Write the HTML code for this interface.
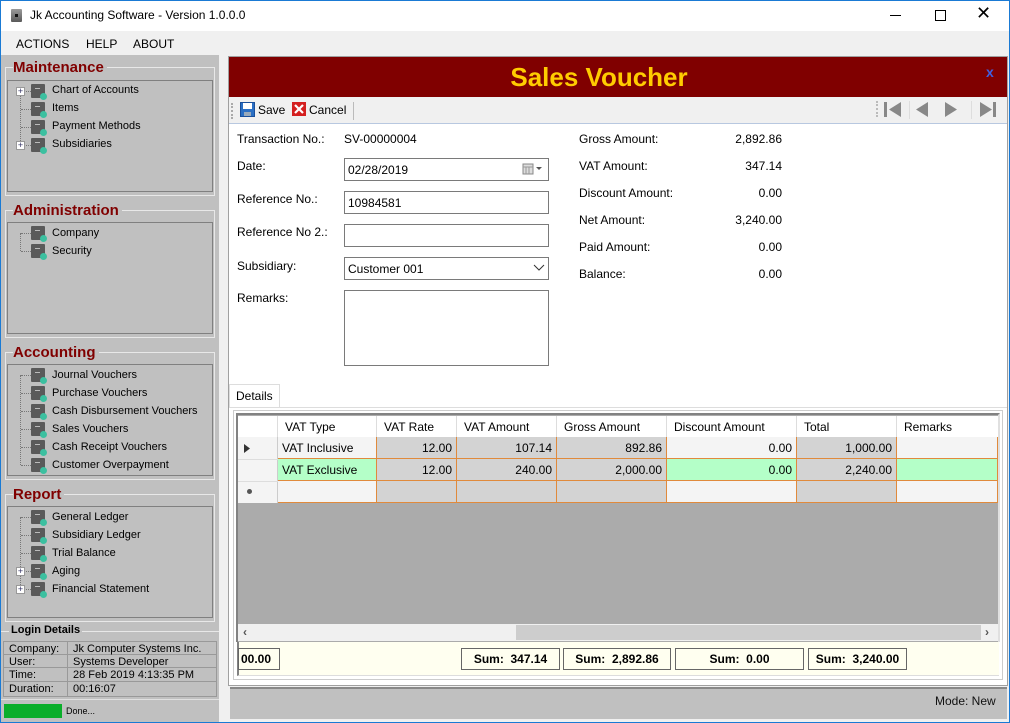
<!DOCTYPE html>
<html><head><meta charset="utf-8"><style>
*{box-sizing:border-box;margin:0;padding:0}
body{width:1010px;height:723px;position:relative;overflow:hidden;font-family:"Liberation Sans",sans-serif;font-size:12px;color:#000;background:#f0f0f0}
.a{position:absolute}
.gt{position:absolute;left:13px;font-weight:bold;font-size:15px;color:#800000;background:#c0c0c0;padding-right:3px}
.gb{position:absolute;left:5px;width:210px;border:1px solid #e8e8e8}
.box{position:absolute;left:7px;width:206px;border:1px solid #808080;border-right-color:#808080}
.ti{position:absolute;left:52px;font-size:11px;white-space:nowrap;margin-top:1px}
.ic{position:absolute;left:31px;width:14px;height:14px;background:#5a5a5a;border-radius:1px;margin-top:1px}
.ic::before{content:"";position:absolute;left:4px;top:4px;width:5px;height:1px;background:#bbb}
.ic::after{content:"";position:absolute;right:-2px;bottom:-2px;width:7px;height:7px;border-radius:50%;background:#3cc0a0}
.pl{position:absolute;left:16px;width:9px;height:9px;border:1px solid #999;background:#fff;font-size:9px;line-height:7px;text-align:center;color:#336;margin-top:1px}
.dl{position:absolute;left:20px;border-left:1px dotted #777;margin-top:1px}
.dh{position:absolute;left:21px;width:10px;border-top:1px dotted #777;margin-top:1px}
.lbl{position:absolute;left:237px}
.inp{position:absolute;left:344px;width:205px;height:23px;border:1px solid #7a7a7a;background:#fff;padding:4px 3px}
.rl{position:absolute;left:579px}
.rv{position:absolute;left:680px;width:102px;text-align:right}
.c{position:absolute;height:22px;border-right:1px solid #e08a3c;border-bottom:1px solid #e08a3c;padding:4px 4px;white-space:nowrap}
.h{position:absolute;top:416px;height:21px;background:#fff;border-right:1px solid #ddd;padding:4px 7px}
.sum{position:absolute;top:648px;height:22px;border:1px solid #666;background:#fffff0;font-weight:bold;font-size:12px;text-align:center;padding-top:3px}
</style></head><body>
<div class="a" style="left:0;top:0;width:1010px;height:723px;border:1px solid #1a7ad4;z-index:50;pointer-events:none"></div>
<div class="a" style="left:0;top:0;width:1010px;height:31px;background:#fff"></div>
<div class="a" style="left:11px;top:9px;width:11px;height:13px;background:linear-gradient(#9a9a9a,#5a5a5a);border-radius:1px"></div>
<div class="a" style="left:15px;top:14px;width:3px;height:3px;background:#111"></div>
<div class="a" style="left:30px;top:8px;font-size:12px">Jk Accounting Software - Version 1.0.0.0</div>
<div class="a" style="left:890px;top:15px;width:11px;height:1px;background:#000"></div>
<div class="a" style="left:935px;top:10px;width:11px;height:11px;border:1px solid #000"></div>
<div class="a" style="left:976px;top:3px;font-size:18px;font-weight:normal">✕</div>
<div class="a" style="left:16px;top:37px">ACTIONS</div>
<div class="a" style="left:86px;top:37px">HELP</div>
<div class="a" style="left:133px;top:37px">ABOUT</div>
<div class="a" style="left:1px;top:55px;width:218px;height:667px;background:#c0c0c0"></div>
<div class="a" style="left:219px;top:55px;width:9px;height:667px;background:#f0f0f0"></div>

<div class="gb" style="top:67px;height:129px"></div><div class="gt" style="top:59px">Maintenance</div>
<div class="box" style="top:80px;height:112px"></div>
<div class="dl" style="top:90px;height:54px"></div>
<div class="dh" style="top:90px"></div><div class="dh" style="top:108px"></div><div class="dh" style="top:126px"></div><div class="dh" style="top:144px"></div>
<div class="pl" style="top:86px">+</div><div class="pl" style="top:140px">+</div>
<div class="ic" style="top:83px"></div><div class="ti" style="top:83px">Chart of Accounts</div>
<div class="ic" style="top:101px"></div><div class="ti" style="top:101px">Items</div>
<div class="ic" style="top:119px"></div><div class="ti" style="top:119px">Payment Methods</div>
<div class="ic" style="top:137px"></div><div class="ti" style="top:137px">Subsidiaries</div>

<div class="gb" style="top:210px;height:128px"></div><div class="gt" style="top:202px">Administration</div>
<div class="box" style="top:222px;height:112px"></div>
<div class="dl" style="top:232px;height:18px"></div>
<div class="dh" style="top:232px"></div><div class="dh" style="top:250px"></div>
<div class="ic" style="top:225px"></div><div class="ti" style="top:226px">Company</div>
<div class="ic" style="top:243px"></div><div class="ti" style="top:244px">Security</div>

<div class="gb" style="top:352px;height:128px"></div><div class="gt" style="top:344px">Accounting</div>
<div class="box" style="top:364px;height:112px"></div>
<div class="dl" style="top:374px;height:90px"></div>
<div class="dh" style="top:374px"></div><div class="dh" style="top:392px"></div><div class="dh" style="top:410px"></div><div class="dh" style="top:428px"></div><div class="dh" style="top:446px"></div><div class="dh" style="top:464px"></div>
<div class="ic" style="top:367px"></div><div class="ti" style="top:368px">Journal Vouchers</div>
<div class="ic" style="top:385px"></div><div class="ti" style="top:386px">Purchase Vouchers</div>
<div class="ic" style="top:403px"></div><div class="ti" style="top:404px">Cash Disbursement Vouchers</div>
<div class="ic" style="top:421px"></div><div class="ti" style="top:422px">Sales Vouchers</div>
<div class="ic" style="top:439px"></div><div class="ti" style="top:440px">Cash Receipt Vouchers</div>
<div class="ic" style="top:457px"></div><div class="ti" style="top:458px">Customer Overpayment</div>

<div class="gb" style="top:494px;height:128px"></div><div class="gt" style="top:486px">Report</div>
<div class="box" style="top:506px;height:112px"></div>
<div class="dl" style="top:516px;height:72px"></div>
<div class="dh" style="top:516px"></div><div class="dh" style="top:534px"></div><div class="dh" style="top:552px"></div><div class="dh" style="top:570px"></div><div class="dh" style="top:588px"></div>
<div class="pl" style="top:566px">+</div><div class="pl" style="top:584px">+</div>
<div class="ic" style="top:509px"></div><div class="ti" style="top:510px">General Ledger</div>
<div class="ic" style="top:527px"></div><div class="ti" style="top:528px">Subsidiary Ledger</div>
<div class="ic" style="top:545px"></div><div class="ti" style="top:546px">Trial Balance</div>
<div class="ic" style="top:563px"></div><div class="ti" style="top:564px">Aging</div>
<div class="ic" style="top:581px"></div><div class="ti" style="top:582px">Financial Statement</div>

<div class="a" style="left:1px;top:631px;width:218px;border-top:1px solid #e8e8e8"></div>
<div class="a" style="left:9px;top:624px;font-weight:bold;font-size:11px;background:#c0c0c0;padding:0 2px">Login Details</div>
<div class="a" style="left:3px;top:641px;width:214px;height:56px;border:1px solid #999;font-size:11px">
<div class="a" style="left:0;top:12px;width:212px;border-top:1px solid #999"></div>
<div class="a" style="left:0;top:25px;width:212px;border-top:1px solid #999"></div>
<div class="a" style="left:0;top:39px;width:212px;border-top:1px solid #999"></div>
<div class="a" style="left:63px;top:0;height:54px;border-left:1px solid #999"></div>
<div class="a" style="left:5px;top:1px">Company:</div><div class="a" style="left:69px;top:1px">Jk Computer Systems Inc.</div>
<div class="a" style="left:5px;top:14px">User:</div><div class="a" style="left:69px;top:14px">Systems Developer</div>
<div class="a" style="left:5px;top:27px">Time:</div><div class="a" style="left:69px;top:27px">28 Feb 2019 4:13:35 PM</div>
<div class="a" style="left:5px;top:41px">Duration:</div><div class="a" style="left:69px;top:41px">00:16:07</div>
</div>
<div class="a" style="left:1px;top:699px;width:218px;border-top:1px solid #e0e0e0"></div>
<div class="a" style="left:4px;top:704px;width:58px;height:14px;background:#0aae2a"></div>
<div class="a" style="left:66px;top:706px;font-size:9px">Done...</div>

<div class="a" style="left:228px;top:56px;width:780px;height:630px;background:#fff;border:1px solid #a0a0a0"></div>
<div class="a" style="left:229px;top:57px;width:778px;height:40px;background:#800000"></div>
<div class="a" style="left:229px;top:62px;width:740px;text-align:center;font-size:26px;font-weight:bold;color:#ffcc00">Sales Voucher</div>
<div class="a" style="left:986px;top:64px;color:#4060e0;font-weight:bold;font-size:14px">x</div>
<div class="a" style="left:229px;top:97px;width:778px;height:27px;background:#f0f0f0;border-bottom:1px solid #b8c8e0"></div>
<div class="a" style="left:231px;top:103px;height:16px;border-left:2px dotted #aaa"></div>
<svg class="a" style="left:240px;top:102px" width="15" height="15"><rect x="0.5" y="0.5" width="14" height="14" fill="#2a6fc4" stroke="#1a4f9a"/><rect x="3" y="1" width="9" height="6" fill="#fff"/><rect x="4" y="10" width="7" height="4" fill="#9ab"/></svg>
<div class="a" style="left:258px;top:103px">Save</div>
<svg class="a" style="left:292px;top:102px" width="14" height="14"><rect width="14" height="14" fill="#d42020"/><path d="M3 3L11 11M11 3L3 11" stroke="#fff" stroke-width="2.2"/></svg>
<div class="a" style="left:309px;top:103px">Cancel</div>
<div class="a" style="left:353px;top:102px;height:18px;border-left:1px solid #bbb"></div>
<div class="a" style="left:876px;top:101px;height:16px;border-left:2px dotted #bbb"></div>
<svg class="a" style="left:882px;top:100px" width="120" height="20" fill="#888"><rect x="2" y="2" width="3" height="15"/><path d="M19 2L7 9.5L19 17Z"/><path d="M46 2L34 9.5L46 17Z"/><path d="M63 2L75 9.5L63 17Z"/><path d="M98 2L110 9.5L98 17Z"/><rect x="111" y="2" width="3" height="15"/><rect x="27" y="1" width="1" height="18" fill="#ddd"/><rect x="89" y="1" width="1" height="18" fill="#ddd"/></svg>

<div class="lbl" style="top:132px">Transaction No.:</div><div class="a" style="left:344px;top:132px">SV-00000004</div>
<div class="lbl" style="top:159px">Date:</div>
<div class="inp" style="top:158px">02/28/2019</div>
<svg class="a" style="left:522px;top:163px" width="22" height="12"><rect x="1" y="1" width="10" height="10" fill="#ddd" stroke="#888"/><path d="M1 4H11M4 4V11M7 4V11" stroke="#999"/><path d="M14 4H20L17 7Z" fill="#555"/></svg>
<div class="lbl" style="top:192px">Reference No.:</div>
<div class="inp" style="top:191px">10984581</div>
<div class="lbl" style="top:225px">Reference No 2.:</div>
<div class="inp" style="top:224px"></div>
<div class="lbl" style="top:259px">Subsidiary:</div>
<div class="inp" style="top:257px;padding-left:3px">Customer 001</div>
<svg class="a" style="left:533px;top:264px" width="12" height="8"><path d="M1 1L6 6L11 1" stroke="#333" fill="none"/></svg>
<div class="lbl" style="top:291px">Remarks:</div>
<div class="inp" style="top:290px;height:76px"></div>

<div class="rl" style="top:132px">Gross Amount:</div><div class="rv" style="top:132px">2,892.86</div>
<div class="rl" style="top:159px">VAT Amount:</div><div class="rv" style="top:159px">347.14</div>
<div class="rl" style="top:186px">Discount Amount:</div><div class="rv" style="top:186px">0.00</div>
<div class="rl" style="top:213px">Net Amount:</div><div class="rv" style="top:213px">3,240.00</div>
<div class="rl" style="top:240px">Paid Amount:</div><div class="rv" style="top:240px">0.00</div>
<div class="rl" style="top:267px">Balance:</div><div class="rv" style="top:267px">0.00</div>

<div class="a" style="left:229px;top:384px;width:51px;height:24px;border:1px solid #ddd;border-bottom:none;background:#fff;padding:4px 6px">Details</div>
<div class="a" style="left:229px;top:407px;width:778px;border-top:1px solid #ddd"></div>
<div class="a" style="left:233px;top:410px;width:770px;height:270px;border:1px solid #ccc"></div>
<div class="a" style="left:236px;top:413px;width:764px;height:229px;background:#ababab;border:2px solid #828282;border-right-color:#e0e0e0;border-bottom:none"></div>
<div class="h" style="left:238px;width:40px"></div>
<div class="h" style="left:278px;width:99px">VAT Type</div>
<div class="h" style="left:377px;width:80px">VAT Rate</div>
<div class="h" style="left:457px;width:100px">VAT Amount</div>
<div class="h" style="left:557px;width:110px">Gross Amount</div>
<div class="h" style="left:667px;width:130px">Discount Amount</div>
<div class="h" style="left:797px;width:100px">Total</div>
<div class="h" style="left:897px;width:101px;border-right:none">Remarks</div>
<div class="a" style="left:238px;top:437px;width:40px;height:66px;background:#f4f4f4;border-right:1px solid #ccc"></div>
<div class="a" style="left:238px;top:459px;width:40px;border-top:1px solid #ddd"></div>
<div class="a" style="left:238px;top:481px;width:40px;border-top:1px solid #ddd"></div>
<svg class="a" style="left:244px;top:444px" width="6" height="9"><path d="M0 0L6 4.5L0 9Z" fill="#333"/></svg>
<div class="a" style="left:247px;top:489px;width:5px;height:5px;border-radius:50%;background:#555"></div>
<div class="c" style="left:278px;top:437px;width:99px;background:#f4f4f4">VAT Inclusive</div>
<div class="c" style="left:377px;top:437px;width:80px;background:#d3d3d3;text-align:right">12.00</div>
<div class="c" style="left:457px;top:437px;width:100px;background:#d3d3d3;text-align:right">107.14</div>
<div class="c" style="left:557px;top:437px;width:110px;background:#d3d3d3;text-align:right">892.86</div>
<div class="c" style="left:667px;top:437px;width:130px;background:#f4f4f4;text-align:right">0.00</div>
<div class="c" style="left:797px;top:437px;width:100px;background:#d3d3d3;text-align:right">1,000.00</div>
<div class="c" style="left:897px;top:437px;width:101px;background:#f4f4f4"></div>
<div class="c" style="left:278px;top:459px;width:99px;background:#b4ffc8">VAT Exclusive</div>
<div class="c" style="left:377px;top:459px;width:80px;background:#d3d3d3;text-align:right">12.00</div>
<div class="c" style="left:457px;top:459px;width:100px;background:#d3d3d3;text-align:right">240.00</div>
<div class="c" style="left:557px;top:459px;width:110px;background:#d3d3d3;text-align:right">2,000.00</div>
<div class="c" style="left:667px;top:459px;width:130px;background:#b4ffc8;text-align:right">0.00</div>
<div class="c" style="left:797px;top:459px;width:100px;background:#d3d3d3;text-align:right">2,240.00</div>
<div class="c" style="left:897px;top:459px;width:101px;background:#b4ffc8"></div>
<div class="c" style="left:278px;top:481px;width:99px;background:#f4f4f4"></div>
<div class="c" style="left:377px;top:481px;width:80px;background:#d3d3d3"></div>
<div class="c" style="left:457px;top:481px;width:100px;background:#d3d3d3"></div>
<div class="c" style="left:557px;top:481px;width:110px;background:#d3d3d3"></div>
<div class="c" style="left:667px;top:481px;width:130px;background:#f4f4f4"></div>
<div class="c" style="left:797px;top:481px;width:100px;background:#d3d3d3"></div>
<div class="c" style="left:897px;top:481px;width:101px;background:#f4f4f4"></div>
<div class="a" style="left:238px;top:624px;width:760px;height:17px;background:#f0f0f0"></div>
<div class="a" style="left:516px;top:625px;width:465px;height:15px;background:#cdcdcd"></div>
<div class="a" style="left:243px;top:625px;color:#555;font-weight:bold">‹</div>
<div class="a" style="left:985px;top:625px;color:#555;font-weight:bold">›</div>
<div class="a" style="left:237px;top:642px;width:762px;height:34px;background:#fffff0;border-left:2px solid #828282;border-bottom:1px solid #ddd"></div>
<div class="sum" style="left:238px;width:42px;text-align:left;padding-left:2px">00.00</div>
<div class="sum" style="left:461px;width:99px">Sum:&nbsp; 347.14</div>
<div class="sum" style="left:563px;width:108px">Sum:&nbsp; 2,892.86</div>
<div class="sum" style="left:675px;width:129px">Sum:&nbsp; 0.00</div>
<div class="sum" style="left:808px;width:99px">Sum:&nbsp; 3,240.00</div>
<div class="a" style="left:228px;top:686px;width:780px;height:36px;background:#f0f0f0"></div>
<div class="a" style="left:230px;top:687px;width:777px;height:32px;background:#c0c0c0;border-top:2px solid #888"></div>
<div class="a" style="left:935px;top:694px;color:#111">Mode: New</div>
</body></html>
